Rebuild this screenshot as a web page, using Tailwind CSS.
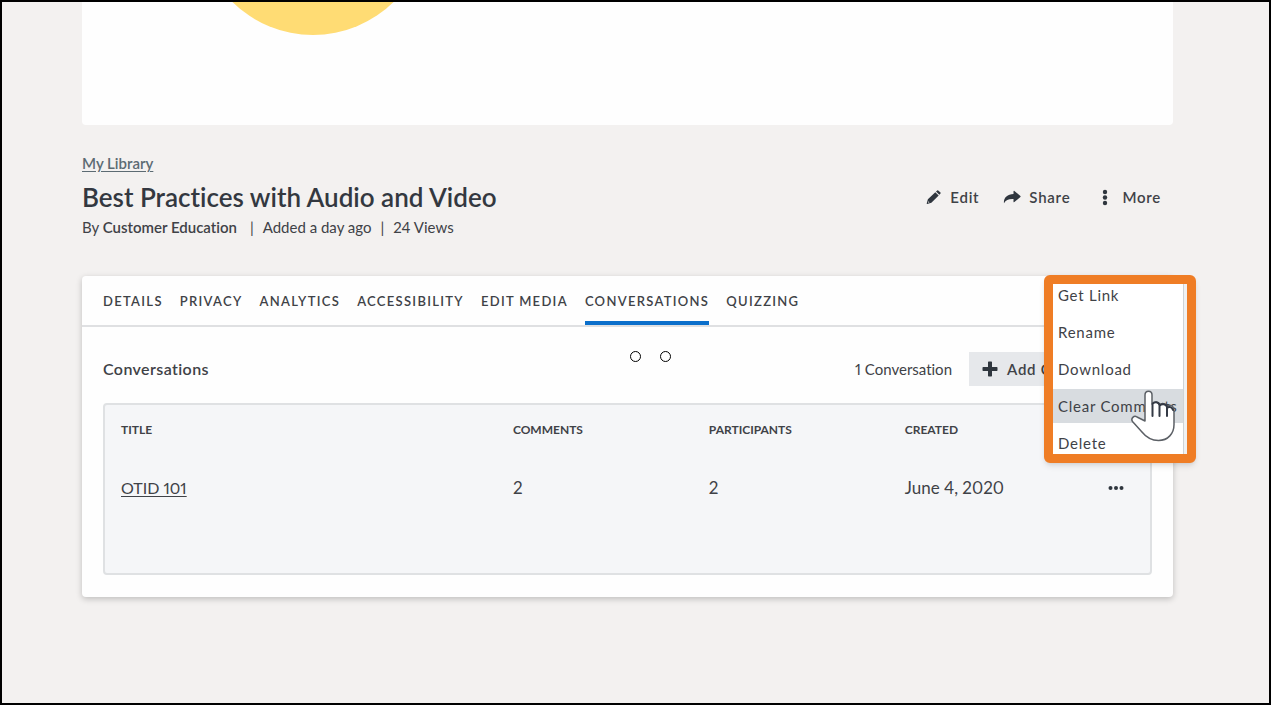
<!DOCTYPE html>
<html lang="en">
  <head>
    <meta charset="UTF-8" />
    <meta name="viewport" content="width=device-width, initial-scale=1.0" />
    <title>Best Practices with Audio and Video</title>
    <script src="https://cdn.jsdelivr.net/npm/@tailwindcss/browser@4"></script>
  </head>
  <body
    class="min-h-screen overflow-hidden border-2 border-black bg-[#f3f1f0] pl-20 pr-24 font-['Lato',sans-serif] text-[#3f4247] proportional-nums [font-variant-ligatures:none]"
  >
    <!-- Player -->
    <div class="h-[123px] overflow-hidden rounded-b-sm bg-[#fefefe]">
      <svg class="h-full w-full" viewBox="0 0 1091 123" preserveAspectRatio="xMinYMin slice">
        <circle cx="231" cy="-82" r="115" fill="#ffdc74" />
      </svg>
    </div>

    <header class="mt-7 flex items-center justify-between">
      <div>
        <a href="#" class="block text-[15px] leading-5 font-semibold text-[#5c6b73] underline underline-offset-2">My Library</a>
        <h1 class="mt-2 text-[26px] leading-8 font-semibold text-[#333840]">Best Practices with Audio and Video</h1>
        <p class="mt-1 flex gap-[9px] text-[15px] leading-5">
          <span>By <strong class="font-semibold">Customer Education</strong></span>
          <span class="pl-1">|</span>
          <span>Added a day ago</span>
          <span>|</span>
          <span>24 Views</span>
        </p>
      </div>
      <div class="mt-1 mr-3 flex gap-6 text-[15px] leading-5 font-semibold tracking-wider">
        <button class="flex items-center gap-2">
          <svg class="size-4" viewBox="0 0 16 16" fill="#2f363e">
            <path d="M12.200 1.400l2.300 2.100a.7.7 0 0 1 0 1L13.300 5.800 10 2.600l1.200-1.200a.7.7 0 0 1 1 0zM9.300 3.300l3.400 3.300-7.300 7.200-4.200 1.100a.4.4 0 0 1-.5-.500l1.200-4.100zM2.400 12.200l-.4 1.500 1.500-.4z" />
          </svg>
          Edit
        </button>
        <button class="flex items-center gap-2">
          <svg class="h-4 w-[18px]" viewBox="0 0 18 16" fill="#2f363e">
            <path d="M10.500 2.300c0-.5.5-.7.900-.4l6 5.200c.3.200.3.600 0 .8l-6 5.200c-.4.300-.9.100-.9-.4V9.900C5.500 9.700 2.800 10.800 1 14.200.2 9.500 4 5 10.500 5z" />
          </svg>
          Share
        </button>
        <button class="flex items-center gap-2">
          <svg class="size-5" viewBox="0 0 20 20" fill="#2f363e">
            <circle cx="11" cy="5" r="2.200" />
            <circle cx="11" cy="10.500" r="2.200" />
            <circle cx="11" cy="16" r="2.200" />
          </svg>
          More
        </button>
      </div>
    </header>

    <main class="relative mt-[39px] rounded bg-[#fefefe] shadow-[0_2px_6px_rgba(0,0,0,0.22)]">
      <nav class="flex h-[51px] gap-[17px] border-b-2 border-[#dfe0e2] px-[21px] text-[13px] font-semibold tracking-widest">
        <a href="#" class="flex items-center pt-0.5">DETAILS</a>
        <a href="#" class="flex items-center pt-0.5">PRIVACY</a>
        <a href="#" class="flex items-center pt-0.5">ANALYTICS</a>
        <a href="#" class="flex items-center pt-0.5">ACCESSIBILITY</a>
        <a href="#" class="flex items-center pt-0.5">EDIT MEDIA</a>
        <a href="#" class="flex items-center border-b-4 border-[#0b6fcb] pt-1.5" aria-current="page">CONVERSATIONS</a>
        <a href="#" class="flex items-center pt-0.5">QUIZZING</a>
      </nav>

      <section class="px-[21px] pt-[25px] pb-[22px]">
        <div class="flex items-center">
          <h2 class="text-base font-semibold tracking-wide">Conversations</h2>
          <span class="ml-auto text-[15px]">1 Conversation</span>
          <button class="ml-[17px] flex h-[34px] w-[183px] items-center gap-[9px] bg-[#e6e8eb] pl-[13px] text-[15px] font-semibold tracking-wider">
            <svg class="size-4" viewBox="0 0 16 16" fill="#2f363e">
              <path d="M6 1.200Q6 .500 6.700.500h2.600q.7 0 .7.700V6h4.800q.7 0 .7.700v2.600q0 .7-.7.700H10v4.800q0 .7-.7.700H6.700q-.7 0-.7-.7V10H1.200q-.7 0-.7-.7V6.700q0-.7.7-.7H6z" />
            </svg>
            Add Conversation
          </button>
        </div>

        <div class="mt-[17px] h-[172px] rounded border-2 border-[#dfe1e3] bg-[#f5f6f8]">
          <table class="w-full table-fixed text-left">
            <thead>
              <tr class="h-12 text-xs">
                <th class="w-[37.5%] pt-0.5 pl-4 font-bold">TITLE</th>
                <th class="w-[18.75%] pt-0.5 pl-4 font-bold">COMMENTS</th>
                <th class="w-[18.75%] pt-0.5 pl-4 font-bold">PARTICIPANTS</th>
                <th class="pt-0.5 pl-4 font-bold">CREATED</th>
                <th class="w-16"></th>
              </tr>
            </thead>
            <tbody>
              <tr class="h-[70px] text-[17px]">
                <td class="pl-4"><a href="#" class="text-base underline underline-offset-2">OTID 101</a></td>
                <td class="pl-4">2</td>
                <td class="pl-4">2</td>
                <td class="pl-4">June 4, 2020</td>
                <td>
                  <button class="ml-5 block" aria-label="Conversation actions">
                    <svg class="h-4 w-5" viewBox="0 0 20 16" fill="#2f363e">
                      <circle cx="4.500" cy="8" r="2" />
                      <circle cx="10" cy="8" r="2" />
                      <circle cx="15.500" cy="8" r="2" />
                    </svg>
                  </button>
                </td>
              </tr>
            </tbody>
          </table>
        </div>
      </section>

      <!-- Loading dots -->
      <div class="absolute top-[75px] left-[548px] flex gap-[19px]">
        <span class="size-[11px] rounded-full border border-black bg-white"></span>
        <span class="size-[11px] rounded-full border border-black bg-white"></span>
      </div>

      <!-- Actions menu -->
      <div class="absolute -top-px -right-[23px] h-[188px] w-[152px] rounded-md border-9 border-[#ef7d25] bg-[#f0f1f2] pr-[3px] shadow-md">
        <div class="flex h-full flex-col justify-center gap-[3px] overflow-hidden border-r border-[#cfd3d6] bg-white text-[15px] tracking-wider">
          <button class="h-[34px] shrink-0 pl-[5px] text-left whitespace-nowrap">Get Link</button>
          <button class="h-[34px] shrink-0 pl-[5px] text-left whitespace-nowrap">Rename</button>
          <button class="h-[34px] shrink-0 pl-[5px] text-left whitespace-nowrap">Download</button>
          <button class="h-[34px] shrink-0 bg-[#d8dce0] pl-[5px] text-left whitespace-nowrap">Clear Comments</button>
          <button class="h-[34px] shrink-0 pl-[5px] text-left whitespace-nowrap">Delete</button>
        </div>
        <svg class="absolute top-[106px] left-[78px] h-[54px] w-[46px]" viewBox="0 0 46 54" fill="none" stroke-linecap="round" stroke-linejoin="round">
          <path
            d="M14 31V5c0-5 7-5 7 0v9c2-3 7-2 7.500 1 2-2.500 7-1.500 7.500 1.500 2-2 6-1.500 6.500 2 .5 2 .5 4 .5 5v11c0 9-6 16-15.500 16-8 0-13-4-17-9L1.500 31.500C-.5 28.500 3 25 6 27z"
            fill="#fff" stroke="#5c6066" stroke-width="1.500"
          />
          <path d="M21.500 26V14c2-3 6.500-2 7 1v11M28.500 16c2-3 7-2 7.500 1v9M36 18c2-2 5-1 6 2" stroke="#343a45" stroke-width="2" />
        </svg>
      </div>
    </main>
  </body>
</html>
